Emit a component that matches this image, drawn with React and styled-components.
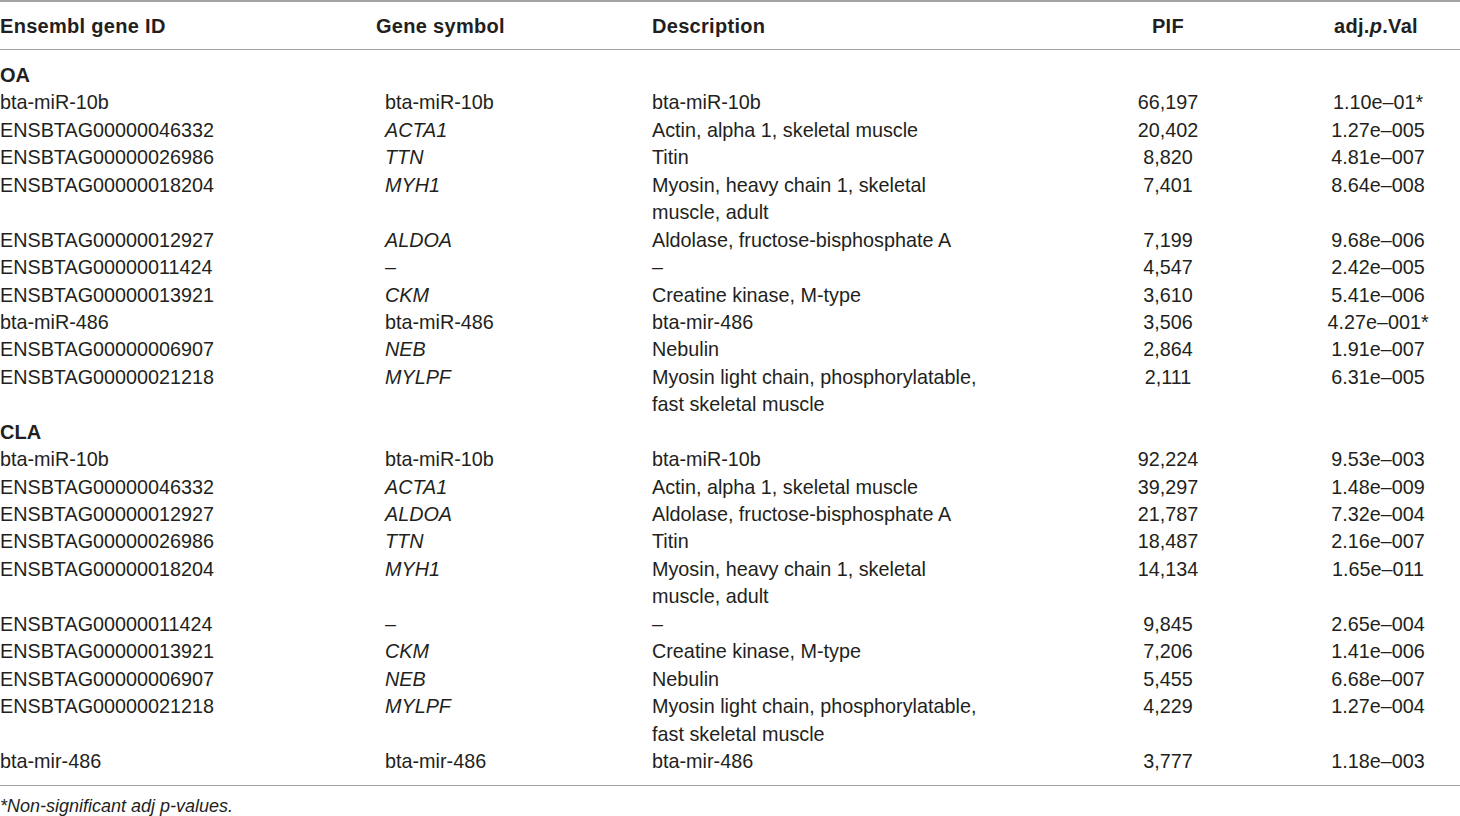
import React from 'react'
import styled, { createGlobalStyle } from 'styled-components'

const GlobalStyle = createGlobalStyle`
  html, body {
    margin: 0;
    padding: 0;
    background: #ffffff;
  }
  body {
    font-family: "Liberation Sans", Arial, Helvetica, sans-serif;
    color: #231f20;
  }
`;

const sections = [
  {
    name: 'OA',
    rows: [
      { id: 'bta-miR-10b', sym: 'bta-miR-10b', plain: true, desc: ['bta-miR-10b'], pif: '66,197', p: '1.10e–01*' },
      { id: 'ENSBTAG00000046332', sym: 'ACTA1', desc: ['Actin, alpha 1, skeletal muscle'], pif: '20,402', p: '1.27e–005' },
      { id: 'ENSBTAG00000026986', sym: 'TTN', desc: ['Titin'], pif: '8,820', p: '4.81e–007' },
      { id: 'ENSBTAG00000018204', sym: 'MYH1', desc: ['Myosin, heavy chain 1, skeletal', 'muscle, adult'], pif: '7,401', p: '8.64e–008' },
      { id: 'ENSBTAG00000012927', sym: 'ALDOA', desc: ['Aldolase, fructose-bisphosphate A'], pif: '7,199', p: '9.68e–006' },
      { id: 'ENSBTAG00000011424', sym: '–', plain: true, desc: ['–'], pif: '4,547', p: '2.42e–005' },
      { id: 'ENSBTAG00000013921', sym: 'CKM', desc: ['Creatine kinase, M-type'], pif: '3,610', p: '5.41e–006' },
      { id: 'bta-miR-486', sym: 'bta-miR-486', plain: true, desc: ['bta-mir-486'], pif: '3,506', p: '4.27e–001*' },
      { id: 'ENSBTAG00000006907', sym: 'NEB', desc: ['Nebulin'], pif: '2,864', p: '1.91e–007' },
      { id: 'ENSBTAG00000021218', sym: 'MYLPF', desc: ['Myosin light chain, phosphorylatable,', 'fast skeletal muscle'], pif: '2,111', p: '6.31e–005' },
    ],
  },
  {
    name: 'CLA',
    rows: [
      { id: 'bta-miR-10b', sym: 'bta-miR-10b', plain: true, desc: ['bta-miR-10b'], pif: '92,224', p: '9.53e–003' },
      { id: 'ENSBTAG00000046332', sym: 'ACTA1', desc: ['Actin, alpha 1, skeletal muscle'], pif: '39,297', p: '1.48e–009' },
      { id: 'ENSBTAG00000012927', sym: 'ALDOA', desc: ['Aldolase, fructose-bisphosphate A'], pif: '21,787', p: '7.32e–004' },
      { id: 'ENSBTAG00000026986', sym: 'TTN', desc: ['Titin'], pif: '18,487', p: '2.16e–007' },
      { id: 'ENSBTAG00000018204', sym: 'MYH1', desc: ['Myosin, heavy chain 1, skeletal', 'muscle, adult'], pif: '14,134', p: '1.65e–011' },
      { id: 'ENSBTAG00000011424', sym: '–', plain: true, desc: ['–'], pif: '9,845', p: '2.65e–004' },
      { id: 'ENSBTAG00000013921', sym: 'CKM', desc: ['Creatine kinase, M-type'], pif: '7,206', p: '1.41e–006' },
      { id: 'ENSBTAG00000006907', sym: 'NEB', desc: ['Nebulin'], pif: '5,455', p: '6.68e–007' },
      { id: 'ENSBTAG00000021218', sym: 'MYLPF', desc: ['Myosin light chain, phosphorylatable,', 'fast skeletal muscle'], pif: '4,229', p: '1.27e–004' },
      { id: 'bta-mir-486', sym: 'bta-mir-486', plain: true, desc: ['bta-mir-486'], pif: '3,777', p: '1.18e–003' },
    ],
  },
]

export default function App() {
  return (
    <Page>
      <GlobalStyle />
      <Table>
        <HeadRow>
          <HeadCell>Ensembl gene ID</HeadCell>
          <HeadCell shift={-9}>Gene symbol</HeadCell>
          <HeadCell>Description</HeadCell>
          <HeadCell center>PIF</HeadCell>
          <HeadCell center shift={-4}>adj.<i>p</i>.Val</HeadCell>
        </HeadRow>
        <Body>
          {sections.map((s) => (
            <React.Fragment key={s.name}>
              <GroupLabel>{s.name}</GroupLabel>
              {s.rows.map((r, i) => (
                <Row key={s.name + i}>
                  <Cell>{r.id}</Cell>
                  <Cell italic={!r.plain}>{r.sym}</Cell>
                  <Cell>
                    {r.desc.map((line, j) => (
                      <Line key={j}>{line}</Line>
                    ))}
                  </Cell>
                  <Cell center>{r.pif}</Cell>
                  <Cell center>{r.p}</Cell>
                </Row>
              ))}
            </React.Fragment>
          ))}
        </Body>
      </Table>
      <Footnote>*Non-significant adj p-values.</Footnote>
    </Page>
  )
}

const Page = styled.div`
width:1460px;
height:816px;
overflow:hidden;
background:#ffffff;
`;

const Table = styled.div`
border-top:2px solid #a3a3a3;
border-bottom:1.5px solid #a3a3a3;
`;

const columns = `385px 267px 388px 256px 164px`;

const HeadRow = styled.div`
display:grid;
grid-template-columns:${columns};
align-items:center;
height:47px;
border-bottom:1.5px solid #a3a3a3;
`;

const HeadCell = styled.div`
font-weight:700;
font-size:20px;
line-height:24px;
letter-spacing:0.3px;
color:#231f20;
white-space:nowrap;
text-align:${(p) => (p.center ? 'center' : 'left')};
margin-left:${(p) => p.shift || 0}px;
`;

const Body = styled.div`
padding:12px 0 10px 0;
`;

const GroupLabel = styled.div`
font-weight:700;
font-size:20px;
height:27.44px;
line-height:27.44px;
`;

const Row = styled.div`
display:grid;
grid-template-columns:${columns};
font-size:19.8px;
line-height:27.44px;
`;

const Cell = styled.div`
white-space:nowrap;
font-style:${(p) => (p.italic ? 'italic' : 'normal')};
text-align:${(p) => (p.center ? 'center' : 'left')};
`;

const Line = styled.div`
height:27.44px;
`;

const Footnote = styled.div`
font-style:italic;
font-size:18px;
line-height:22px;
padding-top:9px;
color:#231f20;
`;
